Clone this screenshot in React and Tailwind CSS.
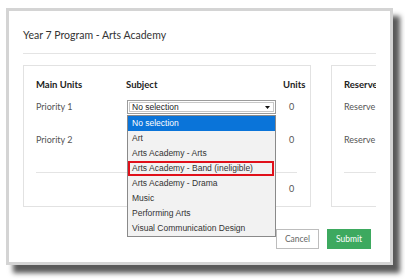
export default function App() {
  const items = [
    "No selection",
    "Art",
    "Arts Academy - Arts",
    "Arts Academy - Band (ineligible)",
    "Arts Academy - Drama",
    "Music",
    "Performing Arts",
    "Visual Communication Design",
  ];
  return (
    <div className="w-[405px] h-[279px] bg-white overflow-hidden pt-[8px] pl-[6px] font-['Lato',sans-serif]">
      <div className="w-[387px] h-[257px] border-[3px] border-[#d4d4d4] bg-white shadow-[7px_8px_5px_rgba(0,0,0,0.65)] px-[14px] pt-[17px] flex flex-col">
        <div className="text-[10.5px] leading-[14px] text-[#333]">Year 7 Program - Arts Academy</div>
        <div className="mt-[11px] h-px bg-[#e4e4e4]" />
        <div className="mt-[11px] flex gap-[20px]">
          {/* Left panel */}
          <div className="w-[288px] border border-[#e2e2e2] pl-[12px] pt-[13px] pb-[1px] text-[9px] text-[#555]">
            <div className="flex h-[12px] items-center font-bold text-[9.5px] text-[#222]">
              <div className="w-[90px]">Main Units</div>
              <div className="w-[157px]">Subject</div>
              <div>Units</div>
            </div>
            <div className="flex h-[32px] items-center">
              <div className="w-[90px]">Priority 1</div>
              <div className="w-[157px] pl-[1px]">
                <div className="relative w-[149px] h-[14px] border border-[#9c9c9c] bg-white p-px font-['Liberation_Sans',sans-serif] text-[8.5px] text-[#222]">
                  <div className="h-full border border-[#c8c8c8] flex items-center justify-between pl-[2px] pr-[3px] leading-none">
                    <span>No selection</span>
                    <svg width="5" height="3" viewBox="0 0 5 3"><path d="M0 0h5L2.5 3z" fill="#111" /></svg>
                  </div>
                  <div className="absolute z-10 left-[-1px] top-[14px] w-[149px] border border-[#8a8a8a] bg-[#f2f2f2]">
                    {items.map((it, i) => (
                      <div
                        key={it}
                        className={
                          i === 0
                            ? "h-[15px] flex items-center pl-[4px] bg-[#0a74d9] text-white"
                            : i === 3
                            ? "h-[15px] flex items-center pl-[4px] mr-px ring-2 ring-inset ring-[#e0101a] text-[#333]"
                            : "h-[15px] flex items-center pl-[4px] text-[#333]"
                        }
                      >
                        {it}
                      </div>
                    ))}
                  </div>
                </div>
              </div>
              <div className="pl-[6px]">0</div>
            </div>
            <div className="flex h-[34px] items-center">
              <div className="w-[90px]">Priority 2</div>
              <div className="w-[157px]" />
              <div className="pl-[6px]">0</div>
            </div>
            <div className="mt-[15px] h-px bg-[#e4e4e4] mr-[13px]" />
            <div className="flex h-[32px] items-center">
              <div className="w-[90px]" />
              <div className="w-[157px]" />
              <div className="pl-[6px]">0</div>
            </div>
          </div>
          {/* Right panel (clipped) */}
          <div className="w-[45px] overflow-hidden">
            <div className="w-[110px] border border-[#e2e2e2] pl-[12px] pt-[13px] pb-[1px] text-[9px] text-[#555]">
              <div className="flex h-[12px] items-center font-bold text-[9.5px] text-[#222]">Reserve</div>
              <div className="flex h-[32px] items-center">Reserve 1</div>
              <div className="flex h-[34px] items-center">Reserve 2</div>
              <div className="mt-[15px] h-px bg-[#e4e4e4]" />
              <div className="h-[32px]" />
            </div>
          </div>
        </div>
        <div className="mt-[22px] flex justify-end gap-[8px] pr-[5px]">
          <div className="w-[43px] h-[20px] border border-[#bdbdbd] bg-white flex items-center justify-center text-[8.5px] text-[#666]">Cancel</div>
          <div className="w-[44px] h-[20px] bg-[#3da95f] flex items-center justify-center text-[8.5px] text-white">Submit</div>
        </div>
      </div>
    </div>
  );
}
